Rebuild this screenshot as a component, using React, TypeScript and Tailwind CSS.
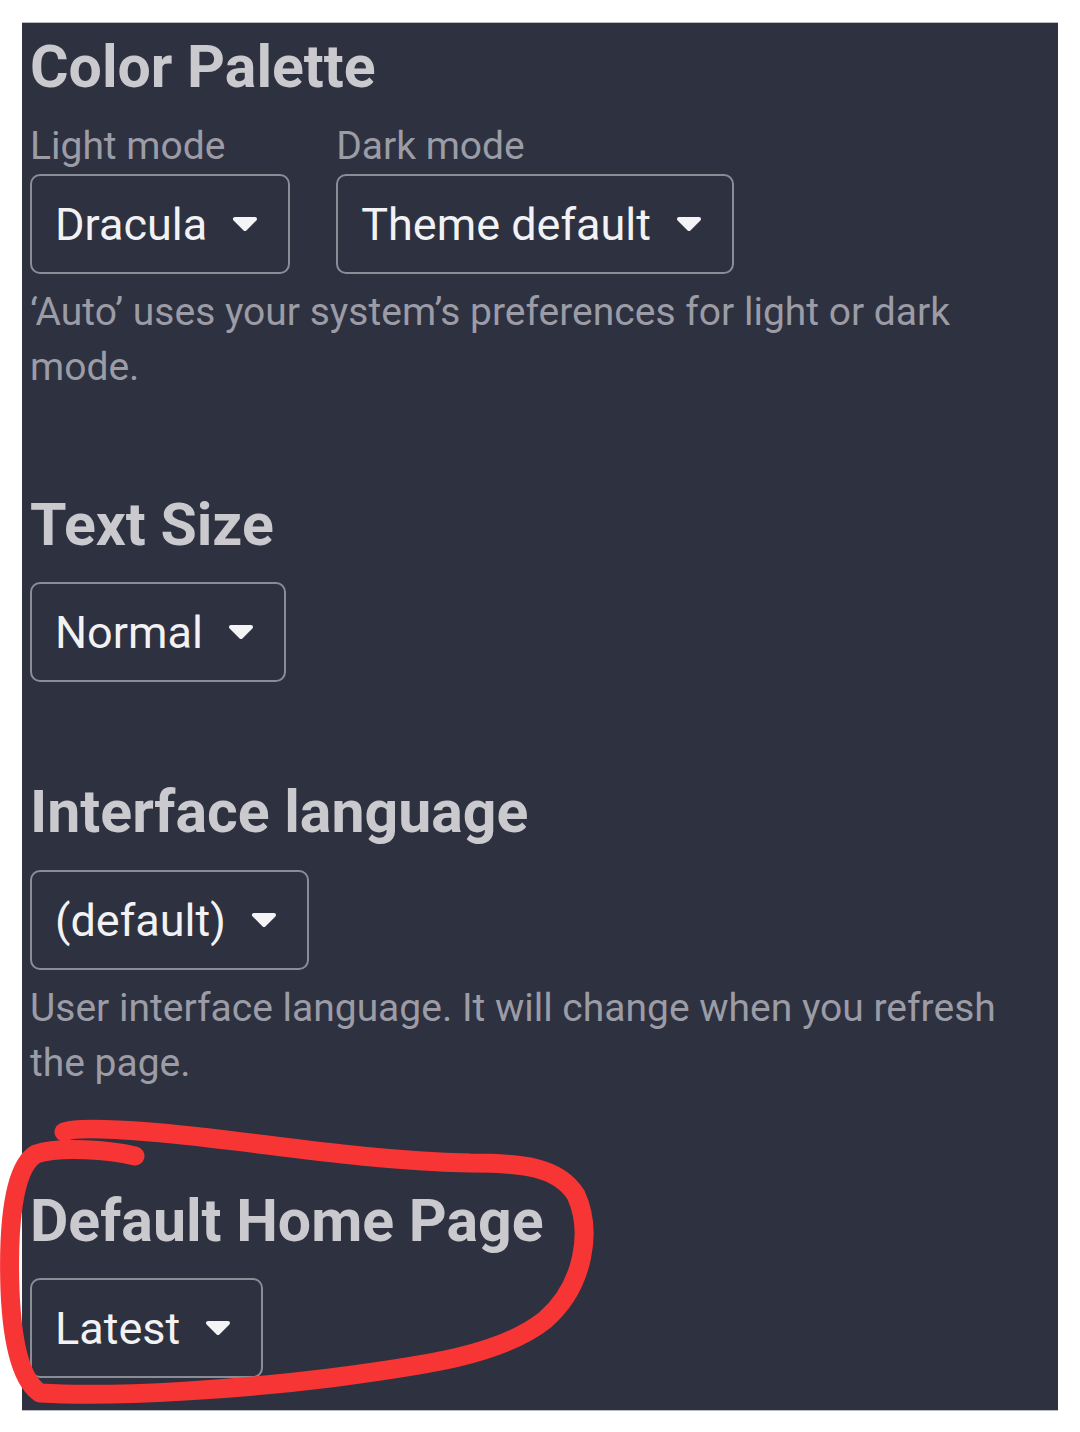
import React from 'react'

function Caret() {
  return (
    <svg width="28" height="16" viewBox="0 0 28 16" className="shrink-0">
      <polygon points="4,3 24,3 14,13" fill="#f4f4f6" stroke="#f4f4f6" strokeWidth="4" strokeLinejoin="round" />
    </svg>
  )
}

function Select({ value }: { value: string }) {
  return (
    <div className="inline-flex items-center gap-[24px] h-[100px] pl-[23px] pr-[29px] border-2 border-[#8b8d96] rounded-[10px] text-[45px] leading-none text-[#f2f2f4] self-start">
      <span>{value}</span>
      <Caret />
    </div>
  )
}

function Heading({ children }: { children: React.ReactNode }) {
  return <h2 className="text-[59px] leading-[72px] font-bold text-[#c9c9ce]">{children}</h2>
}

function Help({ children }: { children: React.ReactNode }) {
  return <p className="text-[39px] leading-[55px] text-[#9b9ca6]">{children}</p>
}

export default function App() {
  return (
    <div className="relative w-[1080px] h-[1432px] bg-white pt-[22px]" style={{ fontFamily: 'Roboto, "Noto Sans", sans-serif' }}>
      <div className="ml-[22px] w-[1036px] h-[1389px] bg-[#2e3140] border-y border-[#b9bac0] pl-[8px] pr-[10px] pt-[8px] flex flex-col">
        {/* Color palette */}
        <Heading>Color Palette</Heading>
        <div className="flex gap-[46px] mt-[16px]">
          <div className="flex flex-col">
            <span className="text-[39px] leading-[55px] text-[#9b9ca6]">Light mode</span>
            <Select value="Dracula" />
          </div>
          <div className="flex flex-col">
            <span className="text-[39px] leading-[55px] text-[#9b9ca6]">Dark mode</span>
            <Select value="Theme default" />
          </div>
        </div>
        <div className="mt-[11px]">
          <Help>‘Auto’ uses your system’s preferences for light or dark mode.</Help>
        </div>

        {/* Text size */}
        <div className="mt-[94px] flex flex-col">
          <Heading>Text Size</Heading>
          <div className="mt-[21px] flex">
            <Select value="Normal" />
          </div>
        </div>

        {/* Interface language */}
        <div className="mt-[94px] flex flex-col">
          <Heading>Interface language</Heading>
          <div className="mt-[22px] flex">
            <Select value="(default)" />
          </div>
          <div className="mt-[11px]">
            <Help>User interface language. It will change when you refresh the page.</Help>
          </div>
        </div>

        {/* Default home page */}
        <div className="mt-[94px] flex flex-col">
          <Heading>Default Home Page</Heading>
          <div className="mt-[21px] flex">
            <Select value="Latest" />
          </div>
        </div>
      </div>

      {/* red marker annotation */}
      <svg className="absolute inset-0 pointer-events-none" width="1080" height="1432" viewBox="0 0 1080 1432">
        <path
          d="M 135 1156 C 110 1150, 60 1146, 36 1154 C 12 1168, 8 1230, 10 1290 C 12 1340, 20 1380, 40 1393 C 120 1398, 250 1388, 330 1378 C 420 1366, 500 1356, 545 1320 C 585 1285, 592 1230, 576 1195 C 558 1166, 520 1163, 470 1163 C 350 1160, 250 1140, 150 1132 C 100 1128, 72 1128, 64 1132"
          fill="none"
          stroke="#f73535"
          strokeWidth="19"
          strokeLinecap="round"
          strokeLinejoin="round"
        />
      </svg>
    </div>
  )
}
